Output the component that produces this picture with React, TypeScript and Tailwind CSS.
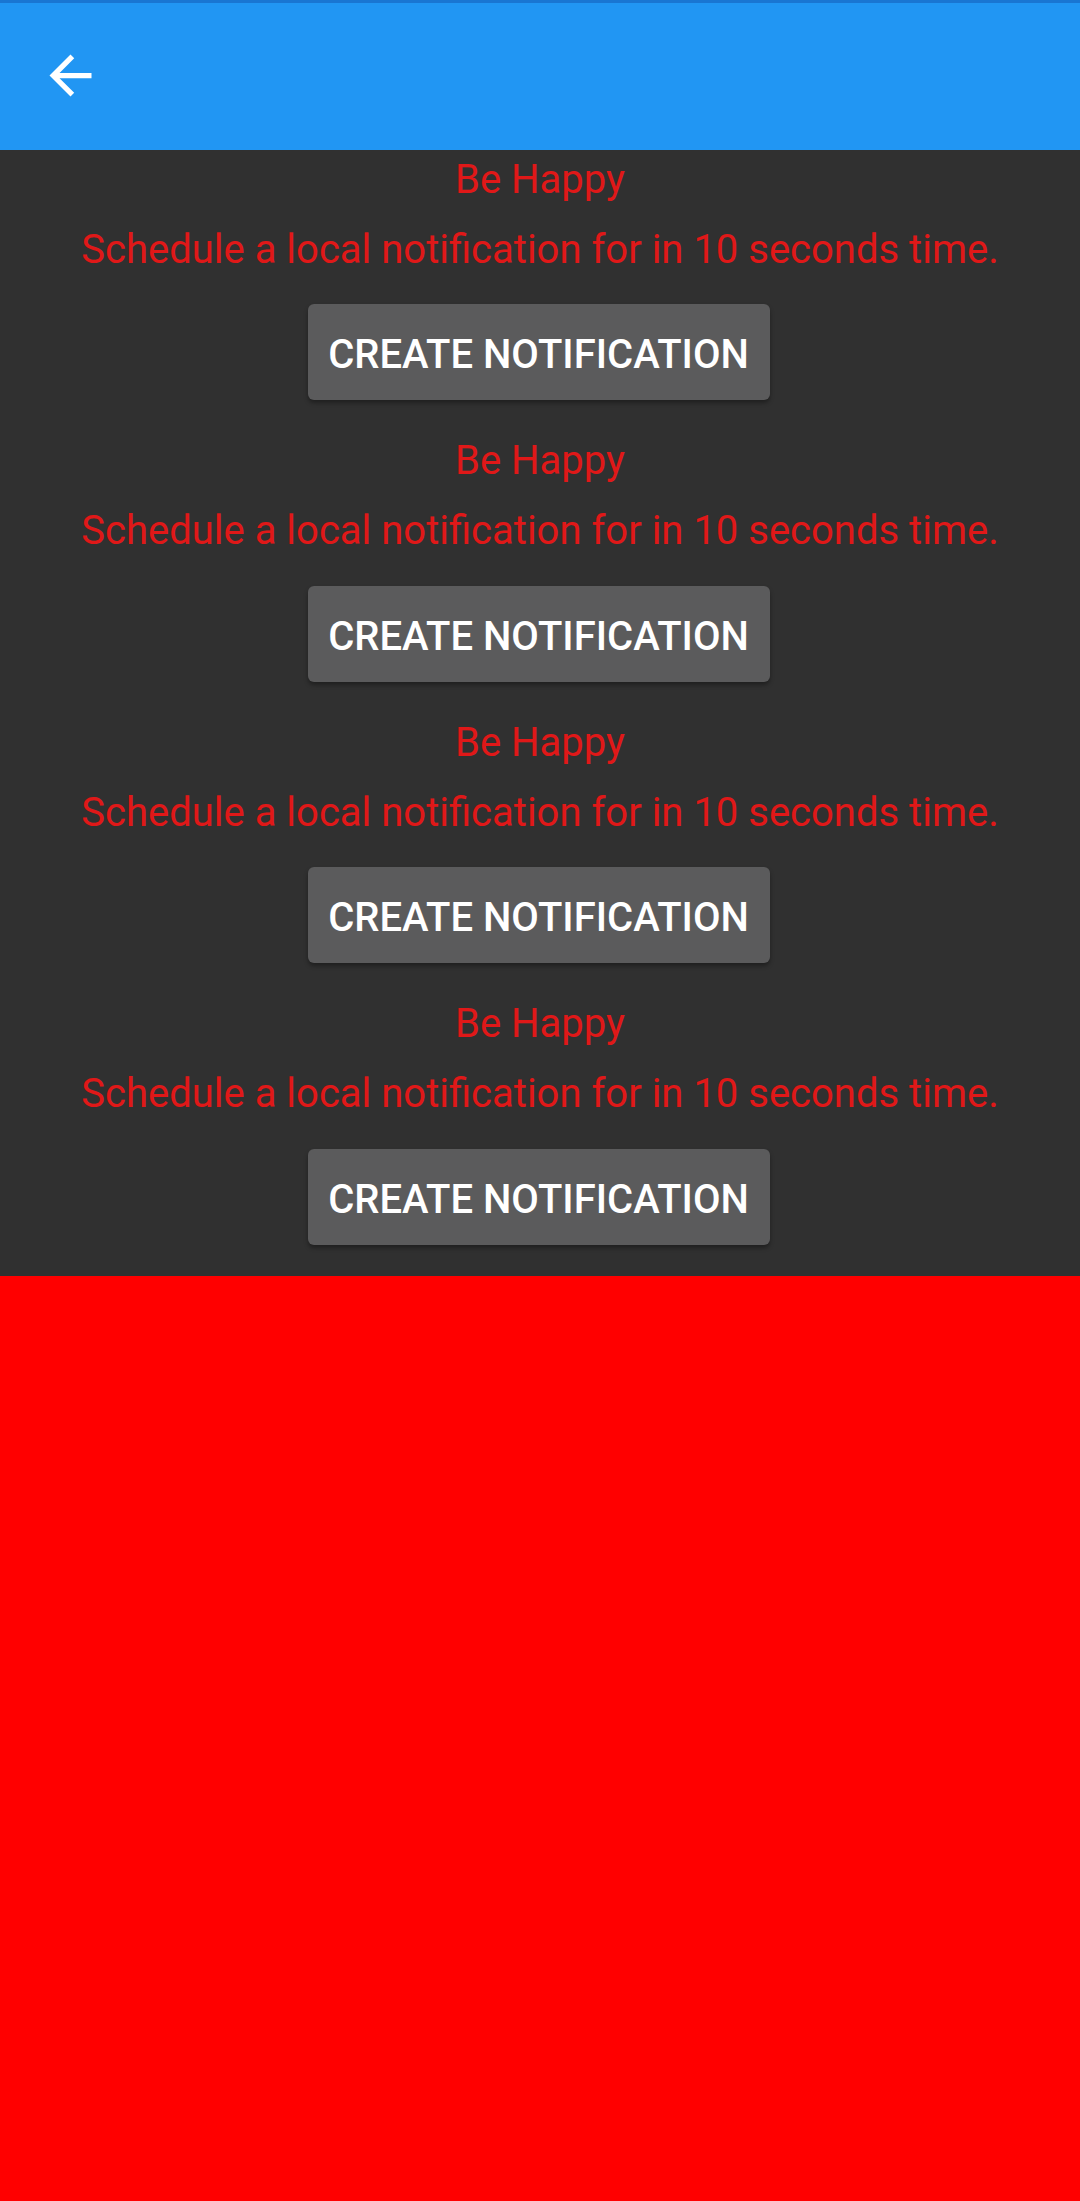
import React from "react";

const Section = () => {
  return (
    <div className="flex flex-col items-center h-[281.6px] pt-[7.5px]">
      <p className="text-[40px] leading-[43px] text-[#e01818]">Be Happy</p>
      <p className="mt-[27px] text-[40px] leading-[43px] text-[#e01818]">
        Schedule a local notification for in 10 seconds time.
      </p>
      <button className="mt-[33.5px] mr-[3px] w-[462px] h-[96px] pt-[6px] rounded-[6px] bg-[#5b5b5c] text-white text-[40px] font-medium shadow-[0_3px_4px_rgba(0,0,0,0.35)]">
        CREATE NOTIFICATION
      </button>
    </div>
  );
};

export default function App() {
  return (
    <div
      className="w-[1080px] h-[2201px] flex flex-col bg-[#ff0000]"
      style={{ fontFamily: "Roboto, 'Noto Sans', sans-serif" }}
    >
      <div className="h-[150px] bg-[#2196f3] border-t-[3px] border-[#1976d2] flex items-center shrink-0">
        <svg
          className="ml-[39px] mt-[-3px]"
          width="63"
          height="63"
          viewBox="0 0 24 24"
          fill="white"
        >
          <path d="M20 11H7.83l5.59-5.59L12 4l-8 8 8 8 1.41-1.41L7.83 13H20v-2z" />
        </svg>
      </div>
      <div className="bg-[#303030] flex flex-col shrink-0">
        <Section />
        <Section />
        <Section />
        <Section />
      </div>
    </div>
  );
}
